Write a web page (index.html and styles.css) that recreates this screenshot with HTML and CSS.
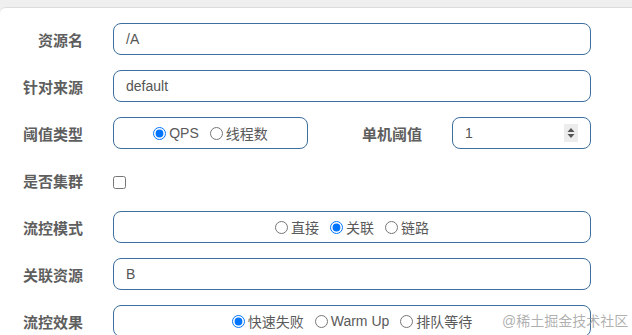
FILE: index.html
```html
<!DOCTYPE html>
<html lang="zh-CN">
<head>
    <meta charset="UTF-8">
    <title>流控规则</title>
    <link rel="stylesheet" href="styles.css">
</head>
<body>
    <div class="modal">
        <form class="rule-form">
            <!-- 资源名 -->
            <div class="form-row">
                <label class="form-label">资源名</label>
                <div class="field text-field">/A</div>
            </div>
            <div class="form-row">
                <label class="form-label">针对来源</label>
                <div class="field text-field">default</div>
            </div>
            <div class="form-row">
                <label class="form-label">阈值类型</label>
                <div class="field radio-field type-field">
                    <label class="radio"><input type="radio" name="grade" checked>QPS</label>
                    <label class="radio"><input type="radio" name="grade">线程数</label>
                </div>
                <label class="form-label inline-label">单机阈值</label>
                <div class="field text-field count-field">
                    <span>1</span>
                    <span class="spinner">
                        <svg width="8" height="12" viewBox="0 0 8 12"><path d="M4 1 L7.5 5 H0.5 Z M4 11 L7.5 7 H0.5 Z" fill="#555"/></svg>
                    </span>
                </div>
            </div>
            <div class="form-row">
                <label class="form-label">是否集群</label>
                <input type="checkbox" class="cluster-check">
            </div>
            <div class="form-row">
                <label class="form-label">流控模式</label>
                <div class="field radio-field">
                    <label class="radio"><input type="radio" name="strategy">直接</label>
                    <label class="radio"><input type="radio" name="strategy" checked>关联</label>
                    <label class="radio"><input type="radio" name="strategy">链路</label>
                </div>
            </div>
            <div class="form-row">
                <label class="form-label">关联资源</label>
                <div class="field text-field">B</div>
            </div>
            <div class="form-row">
                <label class="form-label">流控效果</label>
                <div class="field radio-field">
                    <label class="radio"><input type="radio" name="behavior" checked>快速失败</label>
                    <label class="radio"><input type="radio" name="behavior">Warm Up</label>
                    <label class="radio"><input type="radio" name="behavior">排队等待</label>
                </div>
            </div>
        </form>
        <div class="watermark">@稀土掘金技术社区</div>
    </div>
</body>
</html>
```

FILE: styles.css
```css
body {
    margin: 0;
    background-color: #efefef;
    font-family: "Liberation Sans", "Noto Sans CJK SC", sans-serif;
    color: #555;
    overflow: hidden;
}

.modal {
    position: relative;
    margin-top: 7px;
    height: 327px;
    overflow: hidden;
    background: #fff;
    border-top: 1px solid #dcdcdc;
    border-radius: 6px 0 0 0;
}

.rule-form {
    padding-top: 15px;
    display: flex;
    flex-direction: column;
    gap: 15px;
}

.form-row {
    display: flex;
    align-items: center;
    height: 32px;
}

.form-label {
    width: 83px;
    margin-right: 30px;
    text-align: right;
    font-size: 15px;
    font-weight: bold;
    color: #5e5e5e;
    flex-shrink: 0;
}

.inline-label {
    width: 114px;
}

.field {
    box-sizing: border-box;
    height: 32px;
    width: 478px;
    border: 1px solid #3c6e9e;
    border-radius: 8px;
    font-size: 14px;
    color: #555;
    display: flex;
    align-items: center;
}

.text-field {
    padding: 0 12px;
}

.type-field {
    width: 195px;
}

.count-field {
    width: 139px;
    justify-content: space-between;
    padding-right: 12px;
}

.spinner {
    width: 14px;
    height: 18px;
    background: #ececec;
    display: flex;
    align-items: center;
    justify-content: center;
}

.radio-field {
    justify-content: center;
    gap: 11px;
}

.radio {
    display: flex;
    align-items: center;
    font-size: 14px;
    color: #5a5a5a;
}

.radio input {
    margin: 0 3px 0 0;
    width: 13px;
    height: 13px;
}

.cluster-check {
    margin: 5px 0 0 0;
    width: 13px;
    height: 13px;
}

.watermark {
    position: absolute;
    left: 502px;
    top: 302px;
    font-size: 14px;
    color: rgba(150, 150, 150, 0.75);
    white-space: nowrap;
}
```
